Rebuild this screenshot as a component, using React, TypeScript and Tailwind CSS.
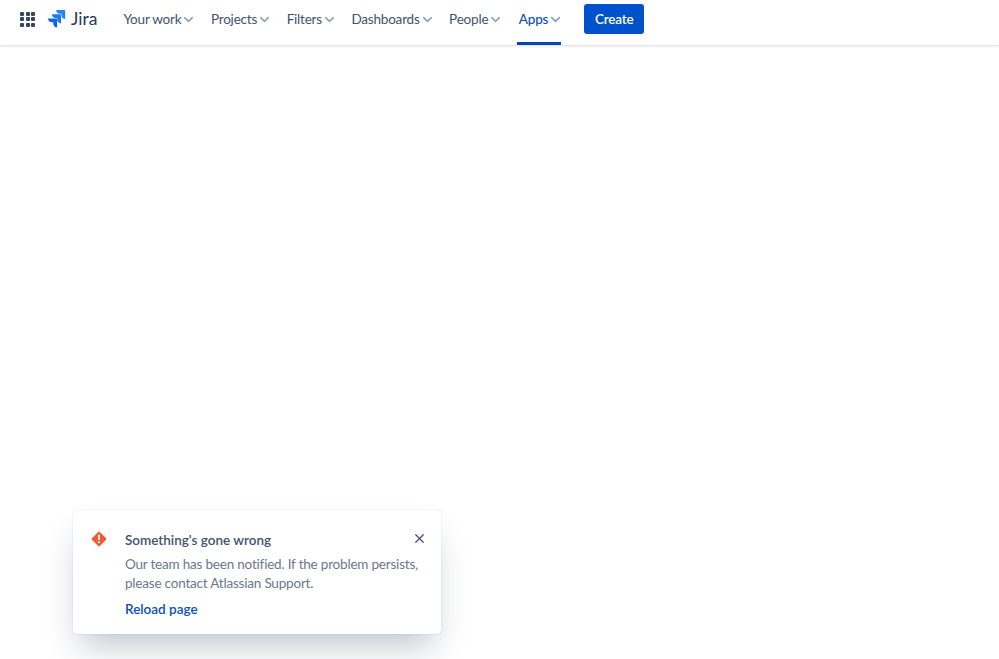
import { ChevronDown, X } from "lucide-react";

const navItems = ["Your work", "Projects", "Filters", "Dashboards", "People"];

function AppSwitcher() {
  return (
    <div className="grid grid-cols-3 gap-[1.5px] w-[15px]">
      {Array.from({ length: 9 }).map((_, i) => (
        <span key={i} className="size-[4px] rounded-[1px] bg-[#344563]" />
      ))}
    </div>
  );
}

function JiraMark() {
  return (
    <svg width="18" height="18" viewBox="0 0 18 18" className="shrink-0">
      <path d="M17.2 0H8.9c0 2.1 1.7 3.8 3.8 3.8h1.5v1.5c0 2.1 1.7 3.8 3.8 3.8V.8c0-.4-.4-.8-.8-.8z" fill="#2684ff" transform="translate(-.8 0)" />
      <path d="M13 4.3H4.7c0 2.1 1.7 3.8 3.8 3.8H10v1.5c0 2.1 1.7 3.8 3.8 3.8V5.1c0-.4-.4-.8-.8-.8z" fill="#1d78f2" transform="translate(-.8 0)" />
      <path d="M8.9 8.5H.6c0 2.1 1.7 3.8 3.8 3.8h1.5v1.5c0 2.1 1.7 3.8 3.8 3.8V9.3c0-.4-.4-.8-.8-.8z" fill="#0c66e4" transform="translate(-.6 0)" />
    </svg>
  );
}

export default function App() {
  return (
    <div className="relative h-[659px] overflow-hidden bg-white font-['Lato',sans-serif]">
      <header className="flex items-start h-[46px] pl-[20px] border-b border-[#e4e6ea] shadow-[0_1px_2px_rgba(9,30,66,0.08)]">
        <div className="flex items-center h-[38px]">
          <AppSwitcher />
          <div className="flex items-center ml-[13px] gap-[5px]">
            <JiraMark />
            <span className="text-[17.5px] leading-none text-[#253858]">Jira</span>
          </div>
        </div>
        <nav className="flex items-start h-full ml-[26px] gap-[14.5px]">
          {navItems.map((item) => (
            <div key={item} className="flex items-center h-[38px] text-[13.5px] tracking-[-0.2px] text-[#42526e]">
              {item}
              <ChevronDown strokeWidth={2.5} className="size-[15px] mt-[1px] text-[#97a0af]" />
            </div>
          ))}
          <div className="flex items-center h-full pb-[4px] px-[2px] -ml-[1px] text-[13.5px] tracking-[-0.2px] font-medium text-[#0b4fb3] border-b-[3px] border-[#0747a6]">
            Apps
            <ChevronDown strokeWidth={2.5} className="size-[15px] -mr-[4px] mt-[1px] text-[#7f9fd0]" />
          </div>
        </nav>
        <button className="ml-[23px] mt-[4px] w-[60px] h-[30px] rounded-[3px] bg-[#0052cc] text-white text-[13.5px] tracking-[-0.2px] font-semibold">
          Create
        </button>
      </header>

      <div className="absolute left-[73px] top-[510px] w-[368px] h-[124px] rounded-[4px] bg-white shadow-[0_20px_32px_-8px_rgba(9,30,66,0.25),0_0_1px_rgba(9,30,66,0.31)] flex pl-[18px] pt-[20px] pr-[16px]">
        <svg width="16" height="16" viewBox="0 0 16 16" className="shrink-0 mt-[1px]">
          <rect x="2.4" y="2.4" width="11.2" height="11.2" rx="1.5" transform="rotate(45 8 8)" fill="#f15b35" />
          <rect x="7.1" y="3.6" width="1.8" height="5.6" rx="0.9" fill="#fff" />
          <circle cx="8" cy="11.2" r="1" fill="#fff" />
        </svg>
        <div className="ml-[18px] flex-1 min-w-0">
          <div className="flex items-start justify-between">
            <h2 className="text-[13.5px] leading-[20px] font-semibold text-[#42526e]">Something's gone wrong</h2>
            <X className="size-[15px] mt-[1px] -mr-[2px] text-[#42526e]" />
          </div>
          <p className="mt-[5px] text-[13.5px] tracking-[-0.2px] leading-[18.5px] text-[#6b778c] whitespace-nowrap">
            Our team has been notified. If the problem persists,
            <br />
            please contact Atlassian Support.
          </p>
          <a className="block mt-[7px] text-[13.5px] leading-[20px] font-semibold text-[#0b4fb3]">Reload page</a>
        </div>
      </div>
    </div>
  );
}
